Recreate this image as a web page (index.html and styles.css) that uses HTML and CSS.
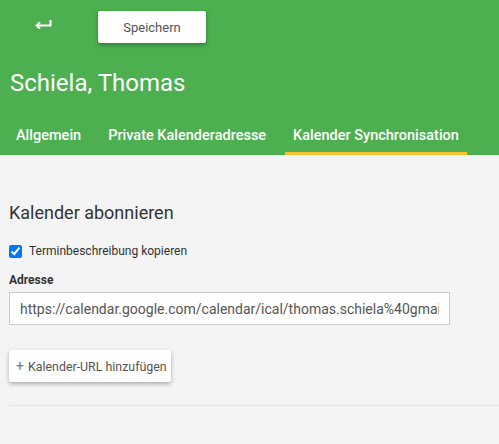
FILE: index.html
```html
<!DOCTYPE html>
<html lang="de">
<head>
<meta charset="utf-8">
<title>Schiela, Thomas</title>
<link rel="stylesheet" href="styles.css">
</head>
<body>
<header class="header">
  <div class="toolbar">
    <button class="back" aria-label="Zurück">
      <svg width="17" height="9" viewBox="0 0 17 9" fill="none" stroke="#fff" stroke-width="2">
        <path d="M15.5 0 V5.5 H2"/>
        <path d="M5 2.2 L1.6 5.5 L5 8.8" stroke-linejoin="miter"/>
      </svg>
    </button>
    <button class="save">Speichern</button>
  </div>
  <h1 class="title">Schiela, Thomas</h1>
  <nav class="tabs">
    <a class="tab">Allgemein</a>
    <a class="tab">Private Kalenderadresse</a>
    <a class="tab active">Kalender Synchronisation</a>
  </nav>
</header>
<main class="content">
  <h2 class="section-title">Kalender abonnieren</h2>
  <label class="check">
    <input type="checkbox" checked>
    <span>Terminbeschreibung kopieren</span>
  </label>
  <div class="field">
    <div class="field-label">Adresse</div>
    <input class="field-input" type="text" value="https://calendar.google.com/calendar/ical/thomas.schiela%40gmail.com/private-abc/basic.ics">
  </div>
  <button class="add"><span class="plus">+</span>Kalender-URL hinzufügen</button>
  <hr class="divider">
</main>
</body>
</html>
```

FILE: styles.css
```css
* { box-sizing: border-box; }
html, body { margin: 0; padding: 0; }
body {
  background: #f4f4f4;
  font-family: Roboto, "Liberation Sans", sans-serif;
  color: #333;
  width: 499px;
  height: 444px;
  overflow: hidden;
}
.header {
  background: #4caf50;
  height: 155px;
  display: flex;
  flex-direction: column;
}
.toolbar {
  display: flex;
  align-items: flex-start;
  padding-top: 11px;
  height: 68px;
}
.back {
  background: none;
  border: 0;
  padding: 0;
  margin: 9px 0 0 35px;
  width: 17px;
  height: 9px;
  display: flex;
}
.save {
  margin-left: 46px;
  width: 108px;
  height: 32px;
  background: #fff;
  border: 0;
  border-radius: 2px;
  box-shadow: 0 2px 4px rgba(0,0,0,0.3);
  font-family: Roboto, "Liberation Sans", sans-serif;
  font-size: 13px;
  color: #555;
  padding: 0;
}
.title {
  margin: 0 0 0 10px;
  font-size: 24px;
  line-height: 30px;
  font-weight: 400;
  color: #fff;
}
.tabs {
  margin-top: auto;
  display: flex;
  gap: 11px;
  padding-left: 8px;
}
.tab {
  padding: 0 8px;
  height: 34px;
  line-height: 30px;
  font-size: 14.5px;
  font-weight: 500;
  color: #fff;
  border-bottom: 3px solid transparent;
}
.tab.active { border-bottom-color: #fbc02d; }
.content {
  padding: 0 0 0 9px;
}
.section-title {
  margin: 46px 0 0 0;
  font-size: 18px;
  line-height: 24px;
  font-weight: 400;
  color: #333;
}
.check {
  display: flex;
  align-items: center;
  gap: 7px;
  margin-top: 19px;
  font-size: 12px;
  color: #333;
}
.check input {
  margin: 0;
  width: 13px;
  height: 13px;
}
.field { margin-top: 15px; }
.field-label {
  font-size: 12px;
  font-weight: 700;
  color: #333;
  line-height: 14px;
}
.field-input {
  display: block;
  margin-top: 5px;
  width: 441px;
  height: 33px;
  border: 1px solid #ccc;
  background: #fff;
  padding: 0 10px;
  font-family: Roboto, "Liberation Sans", sans-serif;
  font-size: 14px;
  color: #555;
  outline: none;
}
.add {
  display: flex;
  align-items: center;
  margin-top: 25px;
  width: 162px;
  height: 32px;
  padding: 0 0 0 7px;
  background: #fff;
  border: 0;
  border-radius: 2px;
  box-shadow: 0 2px 4px rgba(0,0,0,0.3);
  font-family: Roboto, "Liberation Sans", sans-serif;
  font-size: 12.4px;
  color: #555;
}
.plus {
  font-size: 14px;
  color: #777;
  margin-right: 4px;
}
.divider {
  margin: 23px 0 0 0;
  border: 0;
  border-top: 1px solid #e6e6e6;
}
```
